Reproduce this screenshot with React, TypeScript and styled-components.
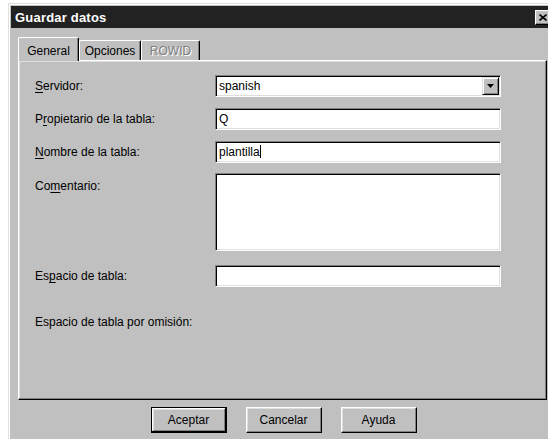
import React from 'react'
import styled, { createGlobalStyle } from 'styled-components'

const GlobalStyle = createGlobalStyle`
  html, body {
    margin: 0;
    padding: 0;
    background: #fff;
    overflow: hidden;
  }
  body {
    font-family: "Liberation Sans", Arial, sans-serif;
    font-size: 12px;
    color: #000;
  }
`

const Window = styled.div`
  box-sizing: border-box;
  margin: 3px 0 0 8px;
  width: 540px;
  height: 436px;
  padding: 2px 0 0 2px;
  background: #c0c0c0;
  border-top: 1px solid #dfdfdf;
  border-left: 1px solid #dfdfdf;
  box-shadow: inset 1px 1px #fff;
`

const TitleBar = styled.div`
  display: flex;
  align-items: center;
  height: 22px;
  padding-left: 4px;
  background: #222;
  color: #fff;
  font-weight: bold;
  font-size: 13px;
  letter-spacing: 0.2px;
`

const CloseButton = styled.div`
  box-sizing: border-box;
  display: flex;
  align-items: center;
  justify-content: center;
  flex: none;
  width: 16px;
  height: 15px;
  margin-left: auto;
  margin-right: -3px;
  background: #c0c0c0;
  border-top: 1px solid #fff;
  border-left: 1px solid #fff;
  border-right: 1px solid #000;
  border-bottom: 1px solid #000;
  box-shadow: inset -1px -1px #808080;
`

const Body = styled.div`
  padding: 9px 0 0 7px;
`

const TabStrip = styled.div`
  display: flex;
  align-items: flex-end;
  height: 23px;
`

const Tab = styled.div<{ $active?: boolean; $disabled?: boolean; $width: number }>`
  box-sizing: border-box;
  position: relative;
  z-index: ${(p) => (p.$active ? 1 : 0)};
  display: flex;
  align-items: center;
  justify-content: center;
  width: ${(p) => p.$width}px;
  height: ${(p) => (p.$active ? 24 : 20)}px;
  margin-bottom: ${(p) => (p.$active ? -1 : 0)}px;
  padding-top: ${(p) => (p.$active ? 2 : 0)}px;
  background: #c0c0c0;
  border-top: 1px solid #fff;
  border-left: 1px solid #fff;
  border-right: 1px solid #000;
  border-radius: 2px 2px 0 0;
  box-shadow: inset -1px 0 #808080;
  color: ${(p) => (p.$disabled ? '#808080' : '#000')};
  text-shadow: ${(p) => (p.$disabled ? '1px 1px #fff' : 'none')};
`

const Panel = styled.div`
  box-sizing: border-box;
  width: 529px;
  height: 340px;
  padding: 14px 0 0 16px;
  background: #c0c0c0;
  border-top: 1px solid #fff;
  border-left: 1px solid #fff;
  border-right: 1px solid #000;
  border-bottom: 1px solid #000;
  box-shadow: inset -1px -1px #808080, inset 1px 1px #dfdfdf;
`

const Row = styled.div<{ $top: number; $start?: boolean }>`
  display: flex;
  align-items: ${(p) => (p.$start ? 'flex-start' : 'center')};
  min-height: 22px;
  margin-top: ${(p) => p.$top}px;
`

const Label = styled.div<{ $pad?: number }>`
  flex: none;
  width: 180px;
  padding-top: ${(p) => p.$pad ?? 0}px;
  white-space: nowrap;

  u {
    text-underline-offset: 2px;
  }
`

const Field = styled.div<{ $height?: number }>`
  box-sizing: border-box;
  display: flex;
  align-items: ${(p) => (p.$height ? 'flex-start' : 'center')};
  width: 286px;
  height: ${(p) => p.$height ?? 22}px;
  padding: 0 3px;
  background: #fff;
  border-top: 1px solid #808080;
  border-left: 1px solid #808080;
  border-right: 1px solid #fff;
  border-bottom: 1px solid #fff;
  box-shadow: inset 1px 1px #000, inset -1px -1px #dfdfdf;
`

const SelectBox = styled(Field)`
  justify-content: space-between;
  padding-right: 1px;
`

const DropButton = styled.div`
  box-sizing: border-box;
  display: flex;
  align-items: center;
  justify-content: center;
  width: 17px;
  height: 18px;
  background: #c0c0c0;
  border-top: 1px solid #dfdfdf;
  border-left: 1px solid #dfdfdf;
  border-right: 1px solid #000;
  border-bottom: 1px solid #000;
  box-shadow: inset 1px 1px #fff, inset -1px -1px #808080;
`

const Caret = styled.span`
  display: inline-block;
  width: 1px;
  height: 13px;
  background: #000;
  vertical-align: -2px;
`

const ButtonRow = styled.div`
  display: flex;
  justify-content: center;
  gap: 19px;
  width: 531px;
  margin-top: 7px;
`

const Button = styled.div<{ $default?: boolean }>`
  box-sizing: border-box;
  display: flex;
  align-items: center;
  justify-content: center;
  width: 76px;
  height: 26px;
  background: #c0c0c0;
  ${(p) =>
    p.$default
      ? `
    border: 1px solid #000;
    box-shadow: inset -1px -1px #000, inset 1px 1px #fff, inset -2px -2px #808080, inset 2px 2px #dfdfdf;
  `
      : `
    border-top: 1px solid #fff;
    border-left: 1px solid #fff;
    border-right: 1px solid #000;
    border-bottom: 1px solid #000;
    box-shadow: inset -1px -1px #808080, inset 1px 1px #dfdfdf;
  `}
`

export default function App() {
  return (
    <>
      <GlobalStyle />
      <Window>
        <TitleBar>
          Guardar datos
          <CloseButton>
            <svg width="8" height="7" viewBox="0 0 8 7">
              <path d="M0.5 0.5 L7.5 6.5 M7.5 0.5 L0.5 6.5" stroke="#000" strokeWidth="1.6" />
            </svg>
          </CloseButton>
        </TitleBar>
        <Body>
          <TabStrip>
            <Tab $active $width={61}>General</Tab>
            <Tab $width={62}>Opciones</Tab>
            <Tab $disabled $width={59}>ROWID</Tab>
          </TabStrip>
          <Panel>
            <Row $top={0}>
              <Label>
                <u>S</u>ervidor:
              </Label>
              <SelectBox>
                spanish
                <DropButton>
                  <svg width="7" height="4" viewBox="0 0 7 4">
                    <path d="M0 0 H7 L3.5 4 Z" fill="#000" />
                  </svg>
                </DropButton>
              </SelectBox>
            </Row>
            <Row $top={11}>
              <Label>
                P<u>r</u>opietario de la tabla:
              </Label>
              <Field>Q</Field>
            </Row>
            <Row $top={11}>
              <Label>
                <u>N</u>ombre de la tabla:
              </Label>
              <Field>
                <span>
                  plantilla
                  <Caret />
                </span>
              </Field>
            </Row>
            <Row $top={10} $start>
              <Label $pad={6}>
                Co<u>m</u>entario:
              </Label>
              <Field $height={78} />
            </Row>
            <Row $top={14}>
              <Label>
                Es<u>p</u>acio de tabla:
              </Label>
              <Field />
            </Row>
            <Row $top={24}>
              <Label>Espacio de tabla por omisión:</Label>
            </Row>
          </Panel>
          <ButtonRow>
            <Button $default>Aceptar</Button>
            <Button>Cancelar</Button>
            <Button>Ayuda</Button>
          </ButtonRow>
        </Body>
      </Window>
    </>
  )
}
